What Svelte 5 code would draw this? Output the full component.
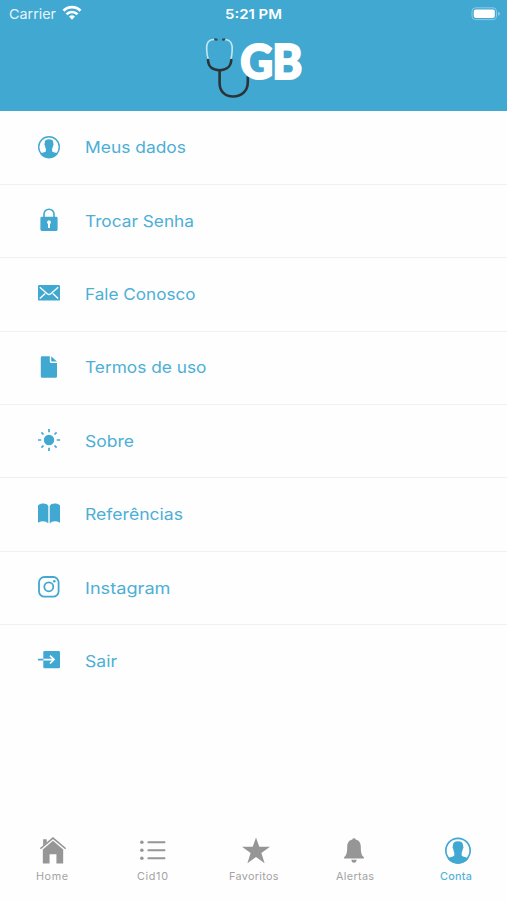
<script lang="ts">
	type Entry = { icon: string; label: string; width: number };

	const menu: Entry[] = [
		{ icon: 'user', label: 'Meus dados', width: 101 },
		{ icon: 'lock', label: 'Trocar Senha', width: 109 },
		{ icon: 'mail', label: 'Fale Conosco', width: 110.5 },
		{ icon: 'file', label: 'Termos de uso', width: 121.5 },
		{ icon: 'sun', label: 'Sobre', width: 49 },
		{ icon: 'book', label: 'Referências', width: 98 },
		{ icon: 'instagram', label: 'Instagram', width: 85.5 },
		{ icon: 'exit', label: 'Sair', width: 32 }
	];

	const tabs: Entry[] = [
		{ icon: 'home', label: 'Home', width: 32 },
		{ icon: 'list', label: 'Cid10', width: 31 },
		{ icon: 'star', label: 'Favoritos', width: 49.5 },
		{ icon: 'bell', label: 'Alertas', width: 38 },
		{ icon: 'user', label: 'Conta', width: 32 }
	];

	const tabViewBox: Record<string, string> = {
		home: '0 0 25 26',
		list: '0 0 25 25',
		star: '0 0 28 26',
		bell: '0 0 20 25',
		user: '1 1 22 22'
	};

	let active = 'Conta';
</script>

{#snippet icon(name: string)}
	{#if name === 'user'}
		<circle cx="12" cy="12" r="10.3" fill="none" stroke="currentColor" stroke-width="1.4" />
		<path
			d="M12 4.200c-3 0-4.500 1.200-4.300 4.300-.5.2-.4 1.800.3 2.300.1 1.400.5 2.300.9 3v2.400c-.6 1.200-4.400 1.200-5.700 2.800a11 11 0 0 0 17.600 0c-1.300-1.600-5.100-1.600-5.700-2.800v-2.400c.4-.7.8-1.600.9-3 .7-.5.8-2.100.3-2.300.2-3.100-1.300-4.300-4.300-4.300z"
		/>
	{:else if name === 'lock'}
		<path d="M7 10V6.200a5 5 0 0 1 10 0V10" fill="none" stroke="currentColor" stroke-width="1.6" />
		<path
			fill-rule="evenodd"
			d="M4.800 8.800h14.400q1.400 0 1.400 1.400v11.400q0 1.400-1.400 1.400H4.800q-1.400 0-1.400-1.400V10.200q0-1.400 1.400-1.400zM12 12.200a2 2 0 0 0-1 3.700v4.100h2v-4.100a2 2 0 0 0-1-3.700z"
		/>
	{:else if name === 'mail'}
		<rect x="1" y="4" width="22" height="15.6" rx="1.2" />
		<path
			d="M2.800 6.200l7.400 6.500q1.800 1.500 3.600 0l7.400-6.500M2.800 17.600l5.400-5.200M21.200 17.600l-5.400-5.200"
			fill="none"
			stroke="#fff"
			stroke-width="1.400"
		/>
	{:else if name === 'file'}
		<path d="M5.200 1.200h7.600v5.200q0 1.600 1.600 1.600H20v13.400q0 1.400-1.400 1.400H5.200q-1.400 0-1.400-1.400V2.600q0-1.400 1.400-1.400z" />
		<path d="M14.200 1.200l5.700 5.400h-5q-.7 0-.7-.7z" />
	{:else if name === 'sun'}
		<circle cx="12" cy="12" r="5.200" />
		<path
			d="M12 1v3.200M12 19.800V23M1 12h3.200M19.800 12H23M4.400 4.400l2.100 2.100M17.500 17.500l2.100 2.100M4.400 19.600l2.100-2.100M17.500 6.500l2.100-2.100"
			fill="none"
			stroke="currentColor"
			stroke-width="1.700"
		/>
	{:else if name === 'book'}
		<path d="M1 3.400C4 .9 9.500.9 11.300 3.900V21.400C8.800 18.800 5 18.600 1 20.700z" />
		<path d="M23 3.400C20 .9 14.500.9 12.700 3.900V21.400C15.200 18.800 19 18.600 23 20.700z" />
	{:else if name === 'instagram'}
		<g fill="none" stroke="currentColor" stroke-width="1.800">
			<rect x="2" y="2" width="19.600" height="19.600" rx="5.400" />
			<circle cx="11.800" cy="11.800" r="4.500" />
		</g>
		<circle cx="17.300" cy="6.300" r="1.300" />
	{:else if name === 'exit'}
		<path d="M7.500 3h14.300q1.200 0 1.200 1.200V19q0 1.200-1.200 1.200H7.500q-1.200 0-1.200-1.200V4.200q0-1.200 1.200-1.200z" />
		<path d="M6.300 11.600H17M13 7.700l4 3.900-4 3.900" fill="none" stroke="#fff" stroke-width="1.700" />
		<path d="M1 11.600h5.300" stroke="currentColor" stroke-width="1.700" />
	{:else if name === 'home'}
		<path d="M3 2.200h3.500v3.200L3 8.500z" />
		<path d="M.3 11.300L12.500 1l12.200 10.300" fill="none" stroke="currentColor" stroke-width="1.600" />
		<path d="M12.500 3.700L22.300 12v13.400h-6.500v-8.700H9.200v8.700H2.700V12z" />
	{:else if name === 'list'}
		<circle cx="1.800" cy="4.600" r="1.700" />
		<circle cx="1.800" cy="12.300" r="1.700" />
		<circle cx="1.800" cy="20" r="1.700" />
		<path d="M7.300 4.600h17M7.300 12.300h17M7.300 20h17" fill="none" stroke="currentColor" stroke-width="1.800" />
	{:else if name === 'star'}
		<path d="M14 0l3.300 9.300H28l-8.600 6.300 3.200 10.200-8.600-6.200-8.600 6.200 3.200-10.200L0 9.300h10.700z" />
	{:else if name === 'bell'}
		<path
			d="M10 .2q1.500 0 1.700 1.400c3.800 1 5.100 3.900 5.100 7.200 0 6.200.8 8.600 3.100 10.500v1.200H.1v-1.200c2.300-1.900 3.100-4.300 3.100-10.500 0-3.300 1.300-6.200 5.100-7.200Q8.500.2 10 .2zM7.300 21.700h5.400q-.3 3-2.700 3t-2.700-3z"
		/>
	{/if}
{/snippet}

<div class="screen">
	<header class="header">
		<div class="status">
			<div class="status__carrier">
				<svg width="49" height="18">
					<text x="0" y="14" textLength="47" lengthAdjust="spacingAndGlyphs">Carrier</text>
				</svg>
				<svg class="status__wifi" width="20" height="16" viewBox="0 0 20 16">
					<g fill="none" stroke="#fff" stroke-width="2.700">
						<path d="M1.500 5.700a12 12 0 0 1 17 0" />
						<path d="M4.500 9.200a8 8 0 0 1 11 0" />
					</g>
					<path d="M7 11.600a4.500 4.500 0 0 1 6 0L10 14.800z" fill="#fff" />
				</svg>
			</div>
			<svg class="status__time" width="60" height="18">
				<text x="1" y="14" textLength="57" lengthAdjust="spacingAndGlyphs">5:21 PM</text>
			</svg>
			<svg class="status__battery" width="30" height="14" viewBox="0 0 30 14">
				<rect x="1" y=".8" width="24.500" height="11.800" rx="3.500" fill="none" stroke="#8bcbe4" />
				<rect x="2.800" y="2.600" width="21" height="8.300" rx="1.800" fill="#fff" />
				<path d="M27 4.700q2 .4 2 2t-2 2z" fill="#8bcbe4" />
			</svg>
		</div>
		<svg class="logo" width="100" height="64" viewBox="0 0 100 64">
			<g fill="none" stroke-linecap="round">
				<path
					d="M10 3.500C3 3.500 2.400 9 2.700 14c.2 4 .8 7 1.600 9.500M20.500 3.500c7 0 8 5.500 7.700 10.500-.2 4-.6 7-1.200 9.500"
					stroke="#c5e6f2"
					stroke-width="1.600"
				/>
				<path d="M11.200 3.400l1.400 .2M19 3.600l1.300-.2" stroke="#334c58" stroke-width="2.200" />
				<path
					d="M4 24C4.500 31.500 8.500 34 15.600 34.200c7.100-.2 11-2.700 11.700-10.200"
					stroke="#2b3338"
					stroke-width="2.600"
				/>
				<path d="M15.600 35v12c0 8.500 5.500 13.500 13.500 13.500S43.800 55.500 43.800 46v-5" stroke="#2b3338" stroke-width="2.600" />
			</g>
			<text x="36.300" y="43" textLength="61" lengthAdjust="spacingAndGlyphs">GB</text>
		</svg>
	</header>

	<ul class="menu">
		{#each menu as item}
			<li class="menu__item">
				<svg class="menu__icon" viewBox="0 0 24 24">{@render icon(item.icon)}</svg>
				<svg class="menu__label" height="24" width={item.width + 4}>
					<text x="0" y="18" textLength={item.width} lengthAdjust="spacingAndGlyphs">{item.label}</text>
				</svg>
			</li>
		{/each}
	</ul>

	<nav class="tabs">
		{#each tabs as tab}
			<div class="tabs__item" class:tabs__item--active={tab.label === active}>
				<svg class="tabs__icon tabs__icon--{tab.icon}" viewBox={tabViewBox[tab.icon]}>
					{@render icon(tab.icon)}
				</svg>
				<svg class="tabs__label" height="16" width={tab.width}>
					<text x="0" y="13" textLength={tab.width}>{tab.label}</text>
				</svg>
			</div>
		{/each}
	</nav>
</div>

<style>
	:global(body) {
		margin: 0;
		background: #fff;
	}
	svg {
		display: block;
		flex: none;
		fill: currentColor;
	}
	.screen {
		width: 507px;
		height: 900px;
		display: flex;
		flex-direction: column;
		overflow: hidden;
		background: #fefefe;
		color: #41a8d1;
		font-family: Inter, 'Liberation Sans', sans-serif;
	}
	.header {
		height: 110.5px;
		flex: none;
		display: flex;
		flex-direction: column;
		align-items: center;
		background: #41a8d1;
		color: #fff;
	}
	.status {
		width: 100%;
		height: 27px;
		padding: 5px 6px 0 9px;
		box-sizing: border-box;
		display: grid;
		grid-template-columns: 1fr auto 1fr;
		font-size: 13.5px;
	}
	.status__carrier {
		display: flex;
		gap: 4px;
		color: #e5f4fa;
	}
	.status__time {
		font-weight: 600;
		margin-right: 3px;
	}
	.status__battery {
		justify-self: end;
		margin-top: 2px;
	}
	.logo {
		margin: 9px 0 0 1px;
		overflow: visible;
		font-family: Lato, 'Open Sans', sans-serif;
		font-size: 47px;
		font-weight: 900;
		letter-spacing: -1px;
	}
	.logo text {
		stroke: #fff;
		stroke-width: 2px;
	}
	.menu {
		flex: 1;
		margin: 0;
		padding: 0;
		list-style: none;
	}
	.menu__item {
		height: 73.4px;
		box-sizing: border-box;
		display: flex;
		align-items: center;
		gap: 24px;
		padding-left: 37px;
		box-shadow: 0 1px #f1f1f1;
	}
	.menu__item:last-child {
		box-shadow: none;
	}
	.menu__icon {
		width: 24px;
		height: 24px;
		margin-bottom: 1px;
	}
	.menu__label {
		color: #4dafd5;
		font-size: 16.3px;
	}
	.tabs {
		height: 64px;
		flex: none;
		display: grid;
		grid-template-columns: repeat(5, 101.2px);
		padding-left: 1px;
		color: #969696;
	}
	.tabs__item {
		display: flex;
		flex-direction: column;
		align-items: center;
		gap: 3px;
		padding-top: 1px;
	}
	.tabs__item--active {
		color: #41a8d1;
	}
	.tabs__icon {
		width: 26px;
		height: 27px;
	}
	.tabs__icon--home {
		margin-left: 2px;
	}
	.tabs__icon--star {
		width: 28px;
		margin-left: 4px;
	}
	.tabs__icon--bell {
		height: 25px;
		padding: 1px 0;
		margin-right: 3px;
	}
	.tabs__icon--user {
		margin-left: 3px;
	}
	.tabs__label {
		color: #a3a3a3;
		font-size: 10.8px;
	}
	.tabs__item--active .tabs__label {
		color: #55b2d7;
		font-weight: 500;
	}
</style>
